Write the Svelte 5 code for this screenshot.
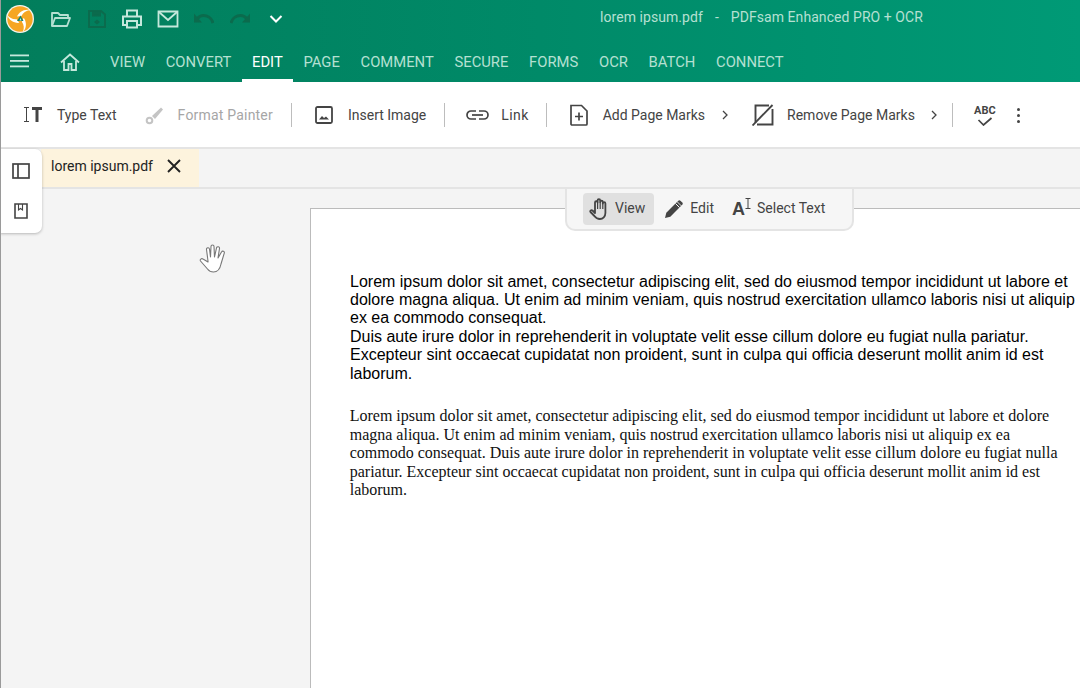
<script>
  const tabs = [
    { label: 'VIEW' }, { label: 'CONVERT' }, { label: 'EDIT', active: true }, { label: 'PAGE' },
    { label: 'COMMENT' }, { label: 'SECURE' }, { label: 'FORMS' }, { label: 'OCR' }, { label: 'BATCH' }, { label: 'CONNECT' }
  ];
</script>

<div class="app">
  <header class="header">
    <div class="titlebar">
      <div class="quick">
        <svg class="logo" viewBox="0 0 28 28" width="28" height="28">
          <circle cx="14" cy="14" r="14" fill="#f4f4ee"/>
          <circle cx="14" cy="14" r="12.700" fill="#f6a623"/>
          <g fill="#fff">
            <path d="M11 11.500C13 7 18 3.500 24 5C20 5.500 17 7.500 15.500 11Z"/>
            <path d="M11 11.500C13 7 18 3.500 24 5C20 5.500 17 7.500 15.500 11Z" transform="rotate(120 14 14)"/>
            <path d="M11 11.500C13 7 18 3.500 24 5C20 5.500 17 7.500 15.500 11Z" transform="rotate(240 14 14)"/>
          </g>
          <path d="M14.500 10.500L17.500 16L11 16Z" fill="#16806a"/>
          <path d="M14.500 13L15.500 15.500L13.500 15.500Z" fill="#d4f0e6"/>
        </svg>
        <svg class="qi folder" viewBox="0 0 22 22" width="22" height="22" fill="none" stroke="#b5e0d2" stroke-width="1.800" stroke-linejoin="round"><path d="M2 18V5h6l2 2h8v3"/><path d="M2 18l3-8h15l-3 8z"/></svg>
        <svg class="qi save" viewBox="0 0 20 20" width="20" height="20" fill="none" stroke="#0b6b4d" stroke-width="2"><path d="M2 2h12l4 3.500V18H2z"/><path d="M6 2.500v4h7v-4" fill="#0b6b4d"/><path d="M10 10.500l3 2.500-3 2.500-3-2.500z" fill="#0b6b4d" stroke="none"/></svg>
        <svg class="qi print" viewBox="0 0 22 22" width="22" height="22" fill="none" stroke="#c5e8dc" stroke-width="2"><path d="M6 8V2.500h10V8"/><path d="M6 17H2V8.500h18V17h-4"/><path d="M6 13h10v6.500H6z"/></svg>
        <svg class="qi mail" viewBox="0 0 22 22" width="22" height="22" fill="none" stroke="#c5e8dc" stroke-width="1.800"><path d="M1.500 3.500h19v15h-19z"/><path d="M2 4l9 8 9-8"/></svg>
        <svg class="qi undo" viewBox="0 0 20 12" width="20" height="12" fill="none"><path d="M19 11C17.500 5.500 13 3.500 9.500 3.500 7 3.500 5 4.500 3.500 6.500" stroke="#0b6b4d" stroke-width="3"/><path d="M0 1.500v9h8z" fill="#0b6b4d"/></svg>
        <svg class="qi redo" viewBox="0 0 20 12" width="20" height="12" fill="none"><path d="M1 11C2.500 5.500 7 3.500 10.500 3.500 13 3.500 15 4.500 16.500 6.500" stroke="#0b6b4d" stroke-width="3"/><path d="M20 1.500v9h-8z" fill="#0b6b4d"/></svg>
        <svg class="qi chev" viewBox="0 0 14 10" width="14" height="10" fill="none" stroke="#fff" stroke-width="2"><path d="M1.500 2l5.500 5.500L12.500 2"/></svg>
      </div>
      <div class="doc-title"><span>lorem ipsum.pdf</span><span>-</span><span>PDFsam Enhanced PRO + OCR</span></div>
    </div>
    <nav class="nav">
      <svg class="burger" viewBox="0 0 20 14" width="20" height="14" fill="#c5e8dc"><rect y="0.500" width="19" height="1.800"/><rect y="6" width="19" height="1.800"/><rect y="11.500" width="19" height="1.800"/></svg>
      <svg class="home" viewBox="0 0 20 18" width="20" height="18" fill="none" stroke="#c5e8dc" stroke-width="1.800"><path d="M1 9.500L10 1.500l9 8"/><path d="M4 8v9h4.500v-6h3v6H16V8"/></svg>
      <div class="tabs">
        {#each tabs as t}
          <div class="tab" class:active={t.active}>{t.label}</div>
        {/each}
      </div>
    </nav>
  </header>

  <div class="toolbar">
    <div class="tool type-text">
      <svg viewBox="0 0 20 15" width="20" height="15" fill="none"><path d="M1 .500h5M1 14.500h5M3.500 .500v14" stroke="#444" stroke-width="1"/><path d="M9 1.500h10M14 1.500V15" stroke="#444" stroke-width="3"/></svg>
      <span>Type Text</span>
    </div>
    <div class="tool painter disabled">
      <svg viewBox="0 0 20 20" width="20" height="20"><path d="M8 11L17 2.500l2 2L11 14z" fill="#c4c4c4"/><circle cx="5.500" cy="15.500" r="2.800" fill="none" stroke="#c4c4c4" stroke-width="2"/></svg>
      <span>Format Painter</span>
    </div>
    <i class="sep s1"></i>
    <div class="tool image">
      <svg viewBox="0 0 18 18" width="18" height="18" fill="none"><rect x="1" y="1" width="16" height="16" rx="1.500" stroke="#444" stroke-width="1.800"/><path d="M4 13.500l3-3.500 2 2 2-1.500 3 3z" fill="#444"/></svg>
      <span>Insert Image</span>
    </div>
    <i class="sep s2"></i>
    <div class="tool link">
      <svg viewBox="0 0 25 10" width="25" height="10" fill="none" stroke="#444" stroke-width="1.700"><path d="M11 1H6a4 4 0 0 0 0 8h5M14 1h5a4 4 0 0 1 0 8h-5"/><path d="M7 5h11"/></svg>
      <span>Link</span>
    </div>
    <i class="sep s3"></i>
    <div class="tool add">
      <svg viewBox="0 0 18 22" width="18" height="22" fill="none" stroke="#444" stroke-width="1.700"><path d="M1 1.500h10.500L17 7v13a1 1 0 0 1-1 1H2a1 1 0 0 1-1-1z"/><path d="M9 8.500v8M5 12.500h8"/></svg>
      <span>Add Page Marks</span>
      <svg class="more" viewBox="0 0 6 10" width="6" height="10" fill="none" stroke="#444" stroke-width="1.300"><path d="M1 1l4 4-4 4"/></svg>
    </div>
    <div class="tool remove">
      <svg viewBox="0 0 22 22" width="22" height="22" fill="none" stroke="#444" stroke-width="1.900"><path d="M17 1.500H3.500v17M5 20.500h15.500V5"/><path d="M.5 21.500L20.500 1"/></svg>
      <span>Remove Page Marks</span>
      <svg class="more" viewBox="0 0 6 10" width="6" height="10" fill="none" stroke="#444" stroke-width="1.300"><path d="M1 1l4 4-4 4"/></svg>
    </div>
    <i class="sep s4"></i>
    <div class="abc">
      <span>ABC</span>
      <svg viewBox="0 0 16 9" width="16" height="9" fill="none" stroke="#444" stroke-width="1.700"><path d="M1.500 3L6.500 8 14.500 1"/></svg>
    </div>
    <div class="dots"><b></b><b></b><b></b></div>
  </div>

  <div class="tabstrip">
    <div class="file-tab">
      <span>lorem ipsum.pdf</span>
      <svg viewBox="0 0 14 14" width="14" height="14" fill="none" stroke="#222" stroke-width="1.900"><path d="M1 1l12 12M13 1L1 13"/></svg>
    </div>
  </div>

  <main class="workspace">
    <div class="page">
      <p class="sans">Lorem ipsum dolor sit amet, consectetur adipiscing elit, sed do eiusmod tempor incididunt ut labore et<br/>dolore magna aliqua. Ut enim ad minim veniam, quis nostrud exercitation ullamco laboris nisi ut aliquip<br/>ex ea commodo consequat.<br/>Duis aute irure dolor in reprehenderit in voluptate velit esse cillum dolore eu fugiat nulla pariatur.<br/>Excepteur sint occaecat cupidatat non proident, sunt in culpa qui officia deserunt mollit anim id est<br/>laborum.</p>
      <p class="serif">Lorem ipsum dolor sit amet, consectetur adipiscing elit, sed do eiusmod tempor incididunt ut labore et dolore<br/>magna aliqua. Ut enim ad minim veniam, quis nostrud exercitation ullamco laboris nisi ut aliquip ex ea<br/>commodo consequat. Duis aute irure dolor in reprehenderit in voluptate velit esse cillum dolore eu fugiat nulla<br/>pariatur. Excepteur sint occaecat cupidatat non proident, sunt in culpa qui officia deserunt mollit anim id est<br/>laborum.</p>
    </div>
  </main>

  <aside class="sidepanel">
    <svg viewBox="0 0 18 16" width="18" height="16" fill="none" stroke="#444" stroke-width="1.700"><rect x="1" y="1" width="16" height="14"/><path d="M6 1v14"/></svg>
    <svg viewBox="0 0 14 16" width="14" height="16" fill="none" stroke="#444" stroke-width="1.600"><path d="M1 1h12v14H1z"/><path d="M4.500 1v6l2-1.500 2 1.500V1" stroke-width="1.100"/></svg>
  </aside>

  <div class="modes">
    <div class="mode on">
      <svg viewBox="0 0 20 22" width="20" height="22" fill="none" stroke="#444" stroke-width="1.800" stroke-linejoin="round"><path d="M6 12V4.500a1.300 1.300 0 0 1 2.600 0V2.500a1.300 1.300 0 0 1 2.600 0v1.500a1.300 1.300 0 0 1 2.600 0v1.500a1.300 1.300 0 0 1 2.600 0V15c0 3.500-2.500 6-5.500 6-2.800 0-4-1-5.500-3L1.500 14c-.8-1.200.8-2.500 2-1.500L6 15z"/><path d="M8.600 4.500V11M11.200 4v7M13.800 5.500V11" stroke-width="1.200"/></svg>
      <span class="label">View</span>
    </div>
    <div class="mode edit">
      <svg viewBox="0 0 20 20" width="20" height="20"><path d="M1 19l1.300-5.300L13 3l4 4L6.300 17.700z" fill="#444"/><path d="M14.300 1.700a1.500 1.500 0 0 1 2.100 0l1.900 1.900a1.500 1.500 0 0 1 0 2.100l-.9.900-4-4z" fill="#444"/><path d="M11.500 4.500l4 4" stroke="#f6f6f6" stroke-width="1"/></svg>
      <span class="label">Edit</span>
    </div>
    <div class="mode select">
      <span class="ai">A<svg viewBox="0 0 6 12" width="6" height="12" fill="none" stroke="#444" stroke-width="1"><path d="M0.500 0.500h5M0.500 10.500h5M3 0.500v10"/></svg></span>
      <span class="label">Select Text</span>
    </div>
  </div>

  <svg class="hand" viewBox="0 0 28 32" width="28" height="32" fill="#fff" stroke="#777" stroke-width="1.100" stroke-linejoin="round"><path d="M9 18L7.500 6.500a1.500 1.500 0 0 1 3-.5L11.500 14 12 3.500a1.500 1.500 0 0 1 3 0l.5 10.500L17.500 5a1.500 1.500 0 0 1 3 .5L19 15 22.500 9a1.500 1.500 0 0 1 2.700 1.300L22 21c-1 5-3 8-7.500 8-3 0-4.500-1-6-3L1.500 18c-1-1.500 1-3 2.500-2l5 3z"/></svg>
</div>

<style>
  :global(body) { margin: 0; font-family: Roboto, sans-serif; background: #f4f4f4; }
  * { box-sizing: border-box; }
  .app { position: relative; width: 1080px; height: 688px; overflow: hidden; display: flex; flex-direction: column; border-left: 1px solid #9a9a9a; background: #f4f4f4; }
  .header { margin-left: -1px; height: 82px; background: linear-gradient(90deg, #027d5b 0%, #008a68 50%, #009a76 100%); color: #fff; flex: none; }
  .titlebar { height: 44px; display: flex; align-items: center; position: relative; padding-left: 6px; }
  .quick { display: flex; align-items: center; }
  .logo { margin-right: 16px; margin-top: -7px; }
  .qi { margin-top: -7px; }
  .folder { margin-right: 15px; }
  .save { margin-right: 14px; }
  .print { margin-right: 14px; }
  .mail { margin-right: 15px; }
  .undo { margin-right: 16px; margin-top: -8px; }
  .redo { margin-right: 19px; margin-top: -8px; }
  .doc-title { position: absolute; left: 600px; top: 9px; font-size: 14px; color: #b5e0d2; display: flex; gap: 12px; letter-spacing: 0.06px; }
  .nav { height: 38px; display: flex; align-items: center; }
  .burger { margin-left: 10px; margin-top: -4px; }
  .home { margin-left: 30px; margin-top: -2px; }
  .tabs { display: flex; margin-left: 19.700px; align-self: stretch; }
  .tab { height: 38px; padding: 0 10.350px; line-height: 36px; font-size: 14.800px; color: #b5e0d2; }
  .tab.active { color: #fff; border-bottom: 3px solid #fff; }
  .toolbar { height: 67px; flex: none; background: #fff; border-bottom: 2px solid #e4e4e4; display: flex; align-items: center; font-size: 14px; color: #444; }
  .tool { display: flex; align-items: center; }
  .type-text { margin-left: 22px; gap: 14px; }
  .painter { margin-left: 27px; gap: 14px; }
  .painter span { letter-spacing: 0.2px; }
  .disabled { color: #a6a6a6; }
  .sep { width: 1px; height: 24px; background: #bdbdbd; flex: none; }
  .s1 { margin-left: 18px; }
  .image { margin-left: 23px; gap: 15px; }
  .s2 { margin-left: 18px; }
  .link { margin-left: 20px; gap: 11px; }
  .link span { letter-spacing: 0.4px; }
  .s3 { margin-left: 17px; }
  .add { margin-left: 23px; gap: 15px; }
  .add .more { margin-left: 2px; }
  .remove { margin-left: 24px; gap: 13px; }
  .remove .more { margin-left: 3px; }
  .s4 { margin-left: 15px; }
  .abc { margin-left: 22px; margin-top: 1px; width: 20px; display: flex; flex-direction: column; align-items: center; gap: 1px; }
  .abc span { font-size: 11px; font-weight: 700; line-height: 11px; }
  .dots { margin-left: 22px; margin-top: 1px; display: flex; flex-direction: column; gap: 3px; }
  .dots b { width: 3px; height: 3px; background: #444; border-radius: 50%; display: block; }
  .tabstrip { height: 40px; flex: none; background: #f4f4f4; border-bottom: 2px solid #e4e4e4; padding-left: 40px; }
  .file-tab { width: 158px; height: 38px; background: #fdf3dd; display: flex; align-items: center; padding: 0 0 4px 10px; gap: 14px; font-size: 14px; color: #222; }
  .workspace { flex: 1; min-height: 0; background: #f4f4f4; padding: 19px 0 0 309px; }
  .page { background: #fff; width: 771px; height: 100%; border: 1px solid #bbb; border-right: 0; border-bottom: 0; padding: 63.600px 0 0 39px; color: #000; }
  .page p { margin: 0; white-space: nowrap; }
  .sans { font: 16px/18.400px "Liberation Sans", Arial, sans-serif; }
  .serif { font: 16px/18.400px "Liberation Serif", "Times New Roman", serif; margin-top: 24.400px !important; margin-left: -0.300px !important; color: #111; }
  .sidepanel { position: absolute; left: -1px; top: 149px; width: 42px; height: 84px; background: #fff; border-radius: 0 7px 7px 0; box-shadow: 0 1px 3px rgba(0,0,0,.25); display: flex; flex-direction: column; align-items: center; padding-top: 14px; gap: 24px; }
  .modes { position: absolute; left: 564px; top: 189px; width: 289px; height: 42px; background: #f6f6f6; border: 2px solid #e4e4e4; border-top: 0; border-radius: 0 0 10px 10px; display: flex; align-items: center; padding-left: 16px; font-size: 14px; color: #444; }
  .mode { display: flex; align-items: center; gap: 6px; height: 32px; padding: 0 8px 0 6px; border-radius: 4px; }
  .mode.on { background: #e0e0e0; padding-right: 9px; margin-right: 4px; }
  .mode.edit { margin-right: 2px; }
  .mode.select { padding-left: 8px; }
  .label { margin-bottom: 2px; }
  .ai { display: flex; align-items: flex-start; font: 700 18px/20px "Liberation Sans", sans-serif; color: #444; }
  .ai svg { margin-left: 0; margin-top: -1px; }
  .hand { position: absolute; left: 198px; top: 243px; }
</style>
